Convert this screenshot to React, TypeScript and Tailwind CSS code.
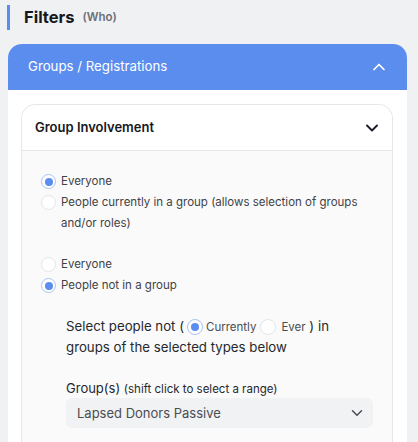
import React from 'react';
import { ChevronUp, ChevronDown } from 'lucide-react';

const Radio: React.FC<{ checked?: boolean; size?: 'sm' | 'md' }> = ({ checked, size = 'sm' }) => (
  <span
    className={`flex shrink-0 items-center justify-center rounded-full border bg-white ${
      size === 'md' ? 'w-[16px] h-[16px]' : 'w-[15px] h-[15px]'
    } ${checked ? 'border-[#a9c3f5]' : 'border-[#e3e5e9]'}`}
  >
    {checked && <span className="w-[8px] h-[8px] rounded-full bg-[#5b8def]" />}
  </span>
);

const Option: React.FC<{ checked?: boolean; label: string }> = ({ checked, label }) => (
  <label className="flex items-start gap-[5px]">
    <span className="flex pt-[3px]">
      <Radio checked={checked} />
    </span>
    <span>{label}</span>
  </label>
);

export default function App() {
  return (
    <div className="min-h-screen bg-[#f0f1f3] pt-[5px] font-['Inter',sans-serif] text-[#1f2328]">
      {/* Title */}
      <div className="flex items-center h-[25px] ml-[7px]">
        <div className="w-[3px] h-full bg-[#5b8def]" />
        <h2 className="ml-[14px] text-[16.5px] font-bold text-[#16181d]">Filters</h2>
        <span className="ml-[8px] text-[11.5px] font-semibold text-[#6b6f76]">(Who)</span>
      </div>

      {/* Outer card */}
      <div className="mt-[14px] ml-[8px] w-[399px] rounded-t-[14px] bg-white pb-8">
        <div className="h-[46px] rounded-t-[14px] bg-[#5b8def] flex items-center justify-between pl-[20px] pr-[18px] text-white">
          <span className="text-[13.25px]">Groups / Registrations</span>
          <ChevronUp size={20} strokeWidth={2.1} />
        </div>

        {/* Inner card */}
        <div className="mt-[14px] ml-[13px] w-[372px] rounded-t-[14px] border border-[#e4e6ea] bg-[#fafafa]">
          <div className="h-[46px] flex items-center justify-between pl-[13px] pr-[10px] border-b border-[#e4e6ea] bg-white rounded-t-[14px]">
            <span className="text-[13px] font-semibold text-[#16181d]">Group Involvement</span>
            <ChevronDown size={20} strokeWidth={2.3} className="text-[#1b1f2a]" />
          </div>

          <div className="pt-[20px] pl-[19px] pr-[20px] pb-6 text-[11.5px] leading-[21px] text-[#3f4247]">
            <div className="flex flex-col">
              <Option checked label="Everyone" />
              <Option label="People currently in a group (allows selection of groups and/or roles)" />
            </div>

            <div className="flex flex-col mt-[20px]">
              <Option label="Everyone" />
              <Option checked label="People not in a group" />
            </div>

            <div className="ml-[25px] mt-[20px] w-[306px]">
              <p className="text-[13.25px] leading-[21px] text-[#25282d]">
                Select people not (
                <span className="inline-flex h-[16px] items-center align-middle leading-none ml-[3px] text-[11.5px] text-[#4a4d52]">
                  <Radio checked size="md" />
                  <span className="ml-[3px]">Currently</span>
                  <span className="ml-[4px] flex">
                    <Radio size="md" />
                  </span>
                  <span className="ml-[5px]">Ever</span>
                </span>{' '}
                ) in groups of the selected types below
              </p>

              <div className="mt-[22px] text-[13px] leading-[16px] text-[#25282d]">
                Group(s) <span className="text-[11.5px]">(shift click to select a range)</span>
              </div>
              <div className="mt-[1px] h-[30px] w-[307px] rounded-[6px] bg-[#f1f2f4] flex items-center justify-between pl-[11px] pr-[7px]">
                <span className="text-[13px] text-[#4a4d52]">Lapsed Donors Passive</span>
                <ChevronDown size={18} strokeWidth={2} className="text-[#4a4d52]" />
              </div>
            </div>
          </div>
        </div>
      </div>
    </div>
  );
}
